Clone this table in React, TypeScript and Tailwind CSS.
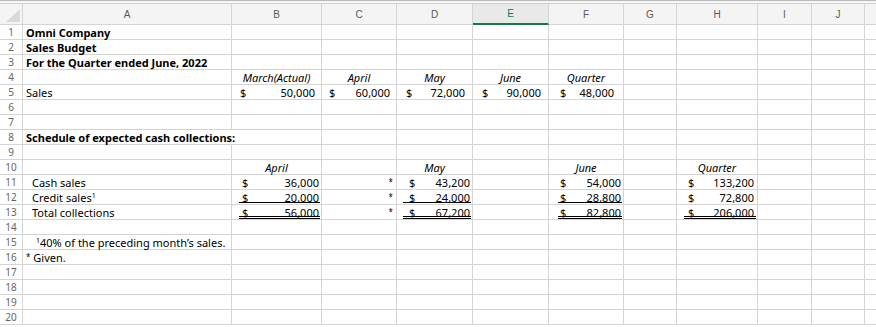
import type { ReactNode } from "react";

// Excel 스타일 그리드: 열 너비 / 행 높이는 스크린샷 기준 픽셀값
const COLS = ["A", "B", "C", "D", "E", "F", "G", "H", "I", "J"];

type Acct = { v: string; u?: 1 | 2; ul: number; gap: number; pr: number };
type Cell =
  | { t: "text"; s: ReactNode; b?: boolean; ind?: number; noR?: boolean }
  | { t: "c"; s: string }
  | { t: "star" }
  | ({ t: "acct" } & Acct)
  | null;

const r5 = (v: string, ul: number, pr: number): Cell => ({ t: "acct", v, ul, gap: 0, pr });

// 각주 위첨자
const Sup = ({ children }: { children: ReactNode }) => (
  <span className="relative -top-[4px] text-[7px] leading-none">{children}</span>
);

const ROWS: Cell[][] = [
  [{ t: "text", s: "Omni Company", b: true }],
  [{ t: "text", s: "Sales Budget", b: true }],
  [{ t: "text", s: "For the Quarter ended June, 2022", b: true }],
  [null, { t: "c", s: "March(Actual)" }, { t: "c", s: "April" }, { t: "c", s: "May" }, { t: "c", s: "June" }, { t: "c", s: "Quarter" }],
  [
    { t: "text", s: "Sales" },
    r5("50,000", 8, 6),
    r5("60,000", 7, 6),
    r5("72,000", 9, 7),
    r5("90,000", 9, 7),
    r5("48,000", 11, 9),
  ],
  [],
  [],
  [{ t: "text", s: "Schedule of expected cash collections:", b: true, noR: true }],
  [],
  [null, { t: "c", s: "April" }, null, { t: "c", s: "May" }, null, { t: "c", s: "June" }, null, { t: "c", s: "Quarter" }],
  [
    { t: "text", s: "Cash sales", ind: 6 },
    { t: "acct", v: "36,000", ul: 7, gap: 3, pr: 2 },
    { t: "star" },
    { t: "acct", v: "43,200", ul: 6, gap: 6, pr: 2 },
    null,
    { t: "acct", v: "54,000", ul: 9, gap: 2, pr: 2 },
    null,
    { t: "acct", v: "133,200", ul: 7, gap: 4, pr: 3 },
  ],
  [
    {
      t: "text",
      ind: 6,
      s: (
        <>
          Credit sales<Sup>1</Sup>
        </>
      ),
    },
    { t: "acct", v: "20,000", u: 1, ul: 7, gap: 3, pr: 2 },
    { t: "star" },
    { t: "acct", v: "24,000", u: 1, ul: 6, gap: 6, pr: 2 },
    null,
    { t: "acct", v: "28,800", u: 1, ul: 9, gap: 2, pr: 2 },
    null,
    { t: "acct", v: "72,800", ul: 7, gap: 4, pr: 3 },
  ],
  [
    { t: "text", s: "Total collections", ind: 6 },
    { t: "acct", v: "56,000", u: 2, ul: 7, gap: 3, pr: 2 },
    { t: "star" },
    { t: "acct", v: "67,200", u: 2, ul: 6, gap: 6, pr: 2 },
    null,
    { t: "acct", v: "82,800", u: 2, ul: 9, gap: 2, pr: 2 },
    null,
    { t: "acct", v: "206,000", u: 2, ul: 7, gap: 4, pr: 3 },
  ],
  [],
  [
    {
      t: "text",
      ind: 10,
      s: (
        <>
          <Sup>1</Sup>40% of the preceding month’s sales.
        </>
      ),
    },
  ],
  [
    {
      t: "text",
      s: (
        <>
          <span className="relative -top-[2px] text-[8px] leading-none">*</span> Given.
        </>
      ),
    },
  ],
  [],
  [],
  [],
  [],
];

function CellView({ c }: { c: Cell }) {
  if (!c) return null;
  if (c.t === "text")
    return (
      <div
        className={`whitespace-nowrap leading-[15px] ${c.b ? "font-bold" : ""}`}
        style={{ paddingLeft: 3 + (c.ind ?? 0) }}
      >
        {c.s}
      </div>
    );
  if (c.t === "c") return <div className="text-center italic leading-[15px]">{c.s}</div>;
  if (c.t === "star")
    return <div className="pr-[3px] text-right text-[8px] leading-[13px]">*</div>;

  const under =
    c.u === 1
      ? "h-[13px] border-b border-black"
      : c.u === 2
        ? "h-[14px] border-b-[3px] border-double border-black"
        : "h-[13px]";
  return (
    <div className="h-full" style={{ paddingLeft: c.ul, paddingRight: 1 }}>
      <div
        className={`flex justify-between leading-[15px] ${under}`}
        style={{ paddingLeft: c.gap, paddingRight: Math.max(c.pr - 1, 0) }}
      >
        <span>$</span>
        <span>{c.v}</span>
      </div>
    </div>
  );
}

export default function App() {
  return (
    <div
      className="h-[327px] w-[876px] overflow-hidden bg-white text-[11px] text-black"
      style={{ fontFamily: '"Noto Sans", "Liberation Sans", sans-serif' }}
    >
      <div className="h-[4px] border-b border-t border-b-[#d0d0d0] border-t-[#b8b8b8] bg-[#f6f6f6]" />
      <div className="grid grid-cols-[23px_209px_90px_75px_76px_76px_75px_53px_81px_54px_53px_1fr]">
        {/* 열 머리글 */}
        <div className="relative h-[21px] border-b border-r border-[#d4d4d4] bg-[#f4f4f4]">
          <svg className="absolute left-[6px] top-[5px]" width="14" height="13" viewBox="0 0 14 13">
            <polygon points="14,0 14,13 0,13" fill="#d9d9d9" />
          </svg>
        </div>
        {COLS.map((l) => (
          <div
            key={l}
            className={`flex h-[21px] items-center justify-center border-r font-['Liberation_Sans',sans-serif] text-[10px] ${
              l === "E"
                ? "border-b-2 border-r-[#d4d4d4] border-b-[#107c41] bg-[#e9e9e9] text-[#107c41]"
                : "border-b border-[#d4d4d4] bg-[#f4f4f4] text-[#5a5a5a]"
            }`}
          >
            {l}
          </div>
        ))}
        <div className="h-[21px] border-b border-[#d4d4d4] bg-[#f4f4f4]" />

        {/* 데이터 행 */}
        {ROWS.map((row, ri) => (
          <Row key={ri} n={ri + 1} row={row} />
        ))}
      </div>
    </div>
  );
}

function Row({ n, row }: { n: number; row: Cell[] }) {
  return (
    <>
      <div className="flex h-[15px] items-center justify-center border-b border-r border-[#d4d4d4] text-[10px] leading-none text-[#666]">
        {n}
      </div>
      {COLS.map((_, ci) => {
        const c = row[ci] ?? null;
        const noR = c && c.t === "text" && c.noR;
        return (
          <div
            key={ci}
            className={`relative h-[15px] border-b border-[#d4d4d4] ${noR ? "z-10" : "border-r"}`}
          >
            <CellView c={c} />
          </div>
        );
      })}
      <div className="h-[15px] border-b border-[#d4d4d4]" />
    </>
  );
}
